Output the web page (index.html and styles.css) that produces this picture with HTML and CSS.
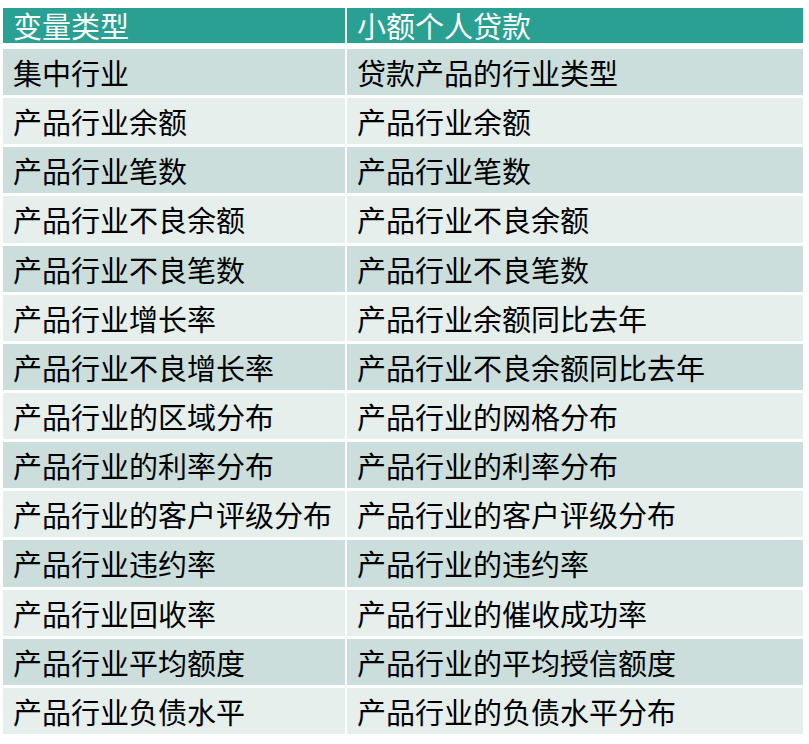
FILE: index.html
```html
<!DOCTYPE html>
<html lang="zh-CN">
<head>
<meta charset="utf-8">
<link rel="stylesheet" href="styles.css">
</head>
<body>
<div class="table">
  <div class="row head"><div class="cell">变量类型</div><div class="cell">小额个人贷款</div></div>
  <div class="row dark"><div class="cell">集中行业</div><div class="cell">贷款产品的行业类型</div></div>
  <div class="row light"><div class="cell">产品行业余额</div><div class="cell">产品行业余额</div></div>
  <div class="row dark"><div class="cell">产品行业笔数</div><div class="cell">产品行业笔数</div></div>
  <div class="row light"><div class="cell">产品行业不良余额</div><div class="cell">产品行业不良余额</div></div>
  <div class="row dark"><div class="cell">产品行业不良笔数</div><div class="cell">产品行业不良笔数</div></div>
  <div class="row light"><div class="cell">产品行业增长率</div><div class="cell">产品行业余额同比去年</div></div>
  <div class="row dark"><div class="cell">产品行业不良增长率</div><div class="cell">产品行业不良余额同比去年</div></div>
  <div class="row light"><div class="cell">产品行业的区域分布</div><div class="cell">产品行业的网格分布</div></div>
  <div class="row dark"><div class="cell">产品行业的利率分布</div><div class="cell">产品行业的利率分布</div></div>
  <div class="row light"><div class="cell">产品行业的客户评级分布</div><div class="cell">产品行业的客户评级分布</div></div>
  <div class="row dark"><div class="cell">产品行业违约率</div><div class="cell">产品行业的违约率</div></div>
  <div class="row light"><div class="cell">产品行业回收率</div><div class="cell">产品行业的催收成功率</div></div>
  <div class="row dark"><div class="cell">产品行业平均额度</div><div class="cell">产品行业的平均授信额度</div></div>
  <div class="row light"><div class="cell">产品行业负债水平</div><div class="cell">产品行业的负债水平分布</div></div>
</div>
</body>
</html>
```
FILE: styles.css
```css
html, body {
  margin: 0;
  padding: 0;
  background: #ffffff;
}
body {
  padding: 8px 6px 0 3px;
  font-family: "Noto Sans CJK SC", "Noto Sans", sans-serif;
}
.table {
  width: 800px;
  display: flex;
  flex-direction: column;
  gap: 3px;
}
.row {
  display: grid;
  grid-template-columns: 342px 456px;
  column-gap: 2px;
  height: 46.15px;
}
.row.head {
  height: 35px;
  margin-bottom: 3px;
}
.cell {
  padding-left: 10px;
  font-size: 29px;
  line-height: 46px;
  color: #000000;
  white-space: nowrap;
  display: flex;
  align-items: center;
}
.head .cell {
  background: #2aa092;
  color: #ffffff;
  line-height: 35px;
  font-weight: 400;
}
.dark .cell {
  background: #cbdedb;
}
.light .cell {
  background: #e6efec;
}
```
